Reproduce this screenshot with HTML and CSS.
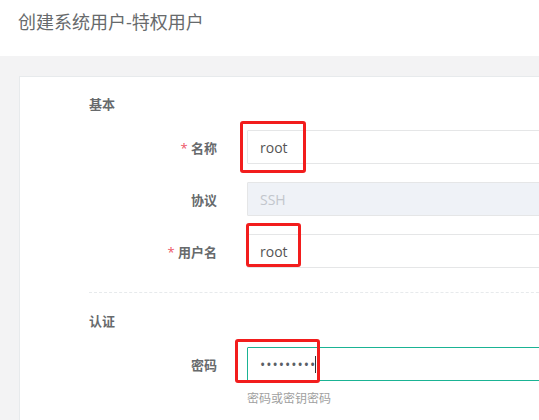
FILE: index.html
```html
<!DOCTYPE html>
<html lang="zh-CN">
<head>
<meta charset="UTF-8">
<meta name="viewport" content="width=device-width, initial-scale=1.0">
<title>创建系统用户</title>
<link rel="stylesheet" href="styles.css">
</head>
<body>
  <header class="page-heading">
    <h2>创建系统用户-特权用户</h2>
  </header>

  <div class="wrapper">
    <div class="ibox">
      <form class="form-horizontal">
        <h3 class="section-title">基本</h3>

        <div class="form-row">
          <label class="form-label required" for="name">名称</label>
          <div class="form-field">
            <input type="text" id="name" class="form-control" value="root">
            <span class="mark mark-name"></span>
          </div>
        </div>

        <div class="form-row">
          <label class="form-label" for="protocol">协议</label>
          <div class="form-field">
            <input type="text" id="protocol" class="form-control" value="SSH" disabled>
          </div>
        </div>

        <div class="form-row">
          <label class="form-label required" for="username">用户名</label>
          <div class="form-field">
            <input type="text" id="username" class="form-control" value="root">
            <span class="mark mark-user"></span>
          </div>
        </div>

        <div class="hr-line-dashed"></div>

        <h3 class="section-title">认证</h3>

        <div class="form-row">
          <label class="form-label" for="password">密码</label>
          <div class="form-field">
            <input type="password" id="password" class="form-control is-focus" value="123456789">
            <span class="caret"></span>
            <span class="mark mark-pass"></span>
          </div>
        </div>
        <div class="form-row help-row">
          <span></span>
          <span class="help-block">密码或密钥密码</span>
        </div>
      </form>
    </div>
  </div>
</body>
</html>
```

FILE: styles.css
```css
html, body {
  height: 100%;
}

body {
  margin: 0;
  padding: 0;
  font-family: 'Open Sans', 'Noto Sans CJK SC', sans-serif;
  color: #676a6c;
  background-color: #f3f3f4;
  overflow: hidden;
}

.page-heading {
  background: white;
  height: 56px;
  padding-left: 18px;
  box-sizing: border-box;
}

.page-heading h2 {
  margin: 0;
  padding-top: 11px;
  font-size: 18px;
  font-weight: 400;
  line-height: 22px;
  color: #676a6c;
}

.wrapper {
  height: calc(100% - 56px);
  padding: 20px 0 0 19px;
  box-sizing: border-box;
}

.ibox {
  height: 100%;
  background: white;
  border-top: 1px solid #e7eaec;
  border-left: 1px solid #e7eaec;
  padding: 18px 0 0 69px;
  box-sizing: border-box;
  overflow: hidden;
}

.form-horizontal {
  margin-right: -20px;
}

.section-title {
  margin: 0 0 17px;
  font-size: 13px;
  font-weight: 700;
  line-height: 18px;
  color: #676a6c;
}

.form-row {
  display: grid;
  grid-template-columns: 128px 1fr;
  column-gap: 30px;
  align-items: center;
  margin-bottom: 18px;
}

.form-label {
  text-align: right;
  font-size: 13px;
  font-weight: 700;
  color: #676a6c;
}

.required::before {
  content: "* ";
  color: #ed5565;
  font-weight: 400;
}

.form-field {
  position: relative;
}

.form-control {
  display: block;
  width: 100%;
  height: 34px;
  padding: 6px 12px;
  border: 1px solid #e5e6e7;
  border-radius: 1px;
  font-family: 'Open Sans', sans-serif;
  font-size: 14px;
  color: #555;
  background: white;
  box-sizing: border-box;
  outline: none;
}

.form-control:disabled {
  background-color: #eff2f7;
  color: #c2c6cc;
}

.form-control.is-focus {
  border-color: #1ab394;
  color: #5b5f66;
  letter-spacing: 1px;
}

.caret {
  position: absolute;
  left: 68px;
  top: 9px;
  width: 1px;
  height: 17px;
  background: #333;
}

.hr-line-dashed {
  border-top: 1px dashed #e7eaec;
  margin: 24px 0 19px;
}

.help-row {
  margin-top: -9px;
}

.help-block {
  font-size: 12px;
  line-height: 17px;
  color: #a0a0a0;
}

/* red annotation boxes drawn over the inputs */
.mark {
  position: absolute;
  border: 3px solid #f21d1d;
  border-radius: 3px;
  box-sizing: border-box;
  pointer-events: none;
}

.mark-name {
  left: -7px;
  top: -9px;
  width: 66px;
  height: 52px;
}

.mark-user {
  left: -1px;
  top: -11px;
  width: 55px;
  height: 44px;
}

.mark-pass {
  left: -12px;
  top: -8px;
  width: 85px;
  height: 44px;
}
```
